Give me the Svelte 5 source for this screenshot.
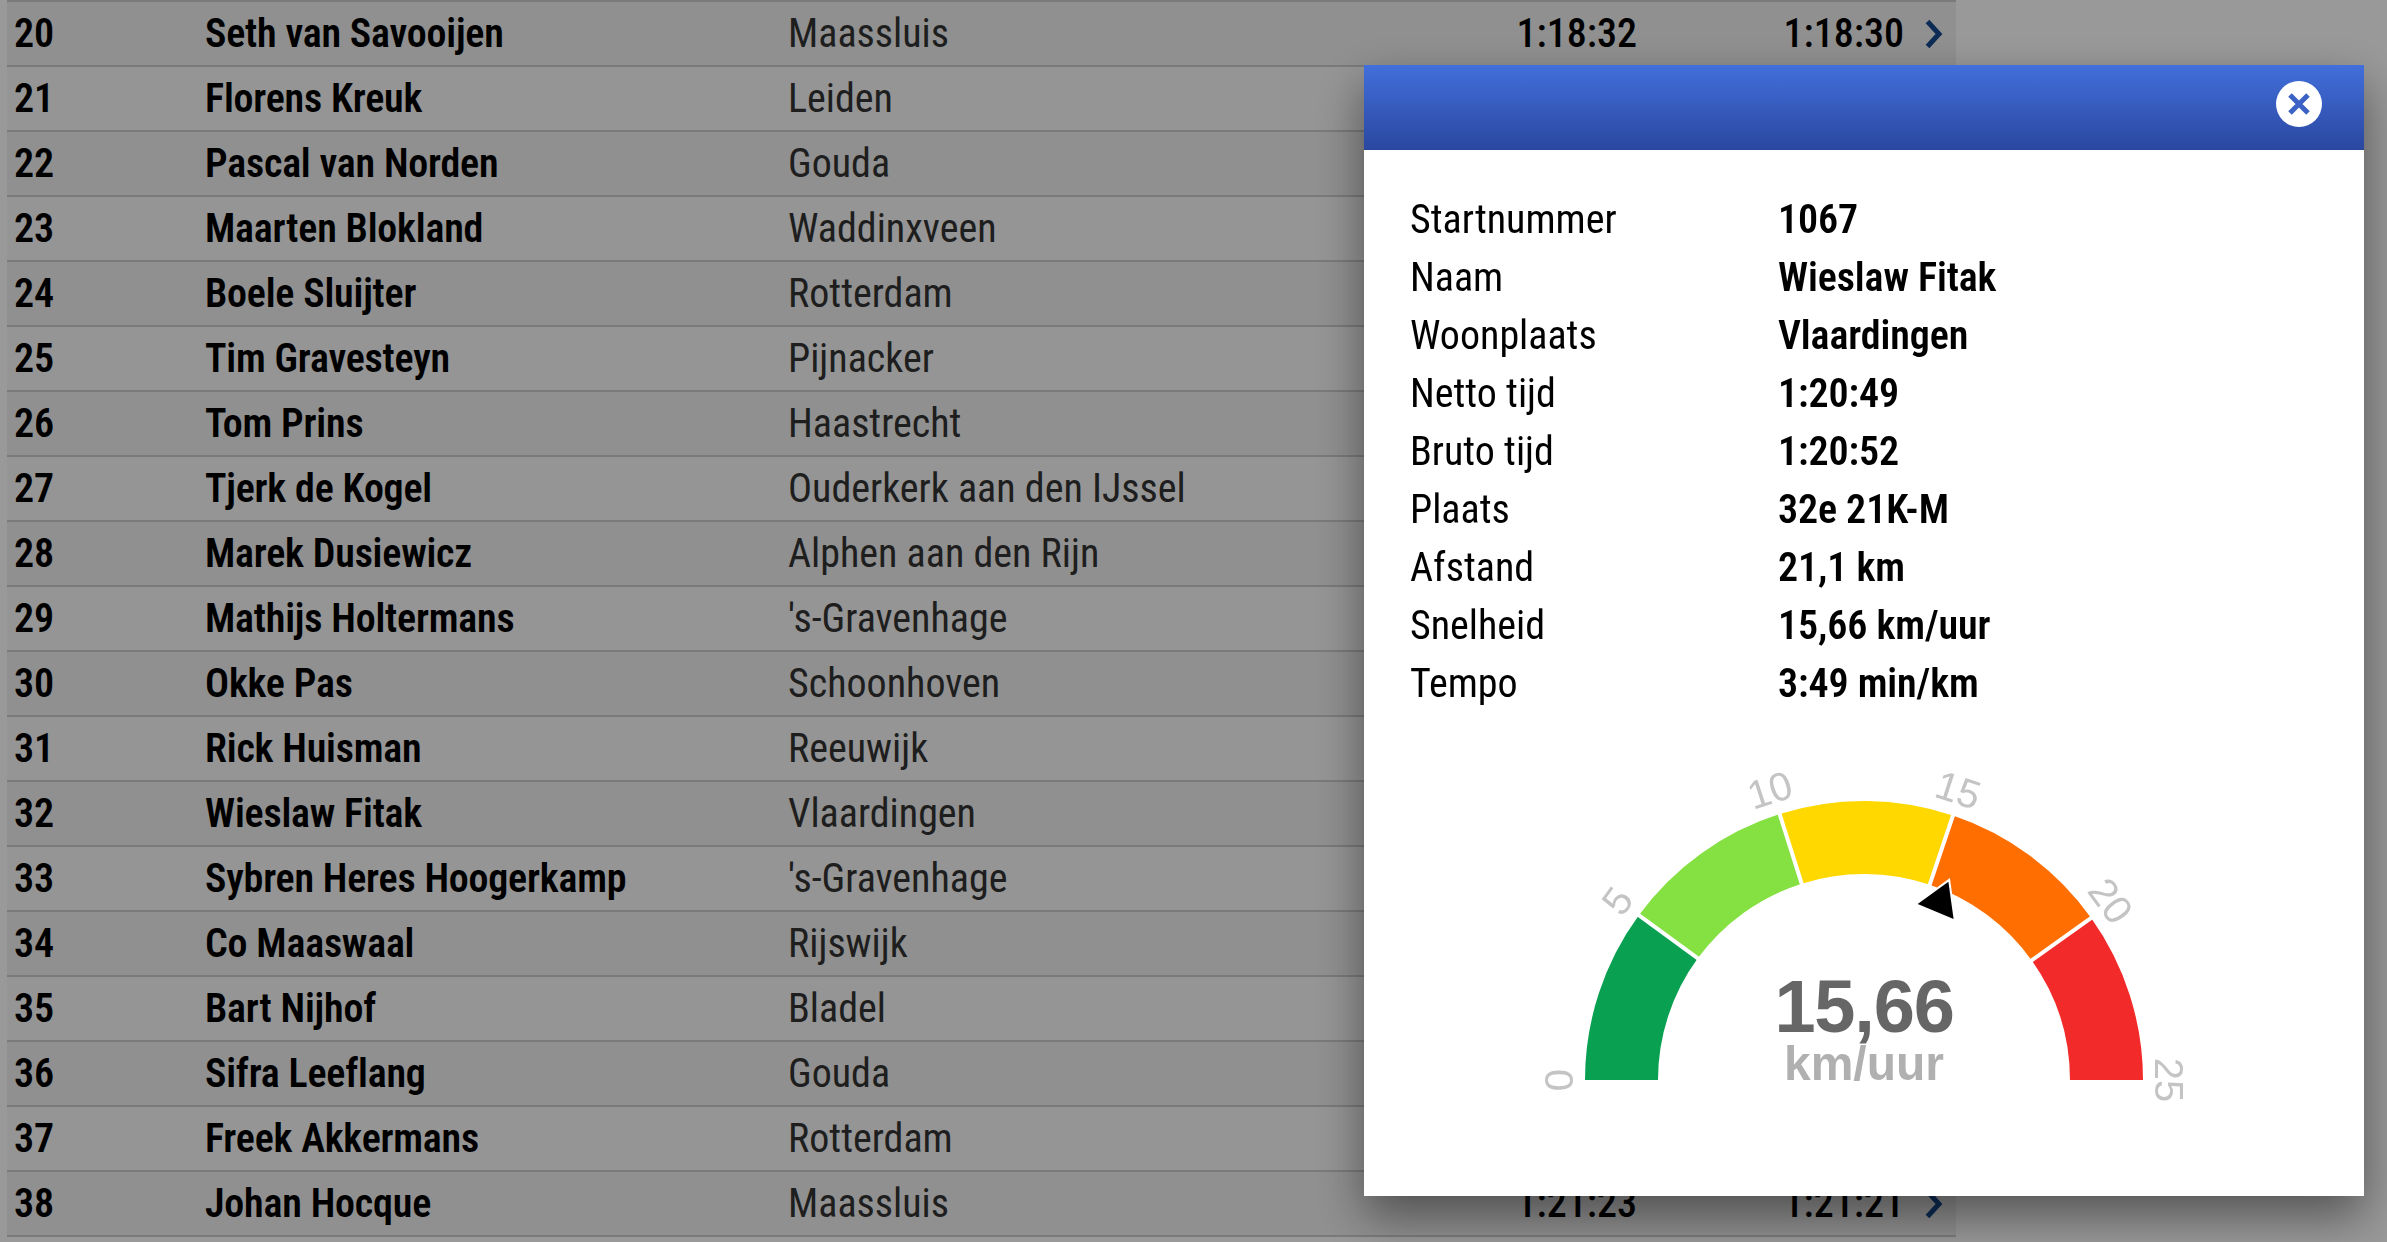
<script>
	const rows = [
		{ nr: 20, name: 'Seth van Savooijen', city: 'Maassluis', netto: '1:18:32', bruto: '1:18:30' },
		{ nr: 21, name: 'Florens Kreuk', city: 'Leiden' },
		{ nr: 22, name: 'Pascal van Norden', city: 'Gouda' },
		{ nr: 23, name: 'Maarten Blokland', city: 'Waddinxveen' },
		{ nr: 24, name: 'Boele Sluijter', city: 'Rotterdam' },
		{ nr: 25, name: 'Tim Gravesteyn', city: 'Pijnacker' },
		{ nr: 26, name: 'Tom Prins', city: 'Haastrecht' },
		{ nr: 27, name: 'Tjerk de Kogel', city: 'Ouderkerk aan den IJssel' },
		{ nr: 28, name: 'Marek Dusiewicz', city: 'Alphen aan den Rijn' },
		{ nr: 29, name: 'Mathijs Holtermans', city: "'s-Gravenhage" },
		{ nr: 30, name: 'Okke Pas', city: 'Schoonhoven' },
		{ nr: 31, name: 'Rick Huisman', city: 'Reeuwijk' },
		{ nr: 32, name: 'Wieslaw Fitak', city: 'Vlaardingen' },
		{ nr: 33, name: 'Sybren Heres Hoogerkamp', city: "'s-Gravenhage" },
		{ nr: 34, name: 'Co Maaswaal', city: 'Rijswijk' },
		{ nr: 35, name: 'Bart Nijhof', city: 'Bladel' },
		{ nr: 36, name: 'Sifra Leeflang', city: 'Gouda' },
		{ nr: 37, name: 'Freek Akkermans', city: 'Rotterdam' },
		{ nr: 38, name: 'Johan Hocque', city: 'Maassluis', netto: '1:21:23', bruto: '1:21:21' },
	];

	const details = [
		['Startnummer', '1067'],
		['Naam', 'Wieslaw Fitak'],
		['Woonplaats', 'Vlaardingen'],
		['Netto tijd', '1:20:49'],
		['Bruto tijd', '1:20:52'],
		['Plaats', '32e 21K-M'],
		['Afstand', '21,1 km'],
		['Snelheid', '15,66 km/uur'],
		['Tempo', '3:49 min/km'],
	];

	// Gauge geometry, center of the dial is (350, 320) in the svg
	const cx = 350;
	const cy = 320;
	const outer = 279;
	const inner = 206;
	const colors = ['#09a151', '#84e141', '#ffd800', '#ff6e00', '#f22a2a'];
	// band edges in degrees from the left end, slightly off 36 steps like the reference
	const stops = [0, 36.2, 72.4, 108.6, 144.5, 180];

	function point(r, deg) {
		const a = (deg * Math.PI) / 180;
		return `${(cx - r * Math.cos(a)).toFixed(2)} ${(cy - r * Math.sin(a)).toFixed(2)}`;
	}

	function segment(i) {
		const a = stops[i];
		const b = stops[i + 1];
		return `M${point(outer, a)} A${outer} ${outer} 0 0 1 ${point(outer, b)} L${point(inner, b)} A${inner} ${inner} 0 0 0 ${point(inner, a)} Z`;
	}

	const ticks = [0, 5, 10, 15, 20, 25].map((v, i) => {
		const deg = i * 36;
		const a = (deg * Math.PI) / 180;
		return { v, x: cx - 305 * Math.cos(a), y: cy - 305 * Math.sin(a), rot: deg - 90 };
	});
</script>

<div class="page">
	<div class="table">
		{#each rows as row, i}
			<div class="row" class:odd={i % 2 === 1}>
				<span class="nr">{row.nr}</span>
				<span class="name">{row.name}</span>
				<span class="city">{row.city}</span>
				<span class="time">{row.netto ?? ''}</span>
				<span class="time">{row.bruto ?? ''}</span>
				<svg class="chevron" viewBox="0 0 18 30" width="18" height="30">
					<path d="M2.5 2.5 L14 15 L2.5 27.5" fill="none" stroke="#154a90" stroke-width="5" />
				</svg>
			</div>
		{/each}
	</div>
</div>

<div class="overlay"></div>

<div class="modal">
	<div class="modal-header">
		<button class="close" aria-label="Sluiten">
			<svg viewBox="0 0 46 46" width="46" height="46">
				<circle cx="23" cy="23" r="23" fill="#fff" />
				<path d="M14 14 L32 32 M32 14 L14 32" stroke="#3c62c6" stroke-width="5" fill="none" />
			</svg>
		</button>
	</div>
	<div class="modal-body">
		<div class="details">
			{#each details as [label, value]}
				<span class="label">{label}</span>
				<span class="value">{value}</span>
			{/each}
		</div>
		<svg class="gauge" viewBox="0 0 700 360" width="700" height="360">
			{#each colors as color, i}
				<path d={segment(i)} fill={color} />
			{/each}
			{#each stops.slice(1, -1) as deg}
				<path d="M{point(inner - 1, deg)} L{point(outer + 1, deg)}" stroke="#fff" stroke-width="4" />
			{/each}
			{#each ticks as t}
				<text class="tick" x={t.x} y={t.y} transform="rotate({t.rot} {t.x} {t.y})">{t.v}</text>
			{/each}
			<polygon points="434.4,121.7 403.7,144 439.6,159" fill="#000" stroke="#fff" stroke-width="4" paint-order="stroke" />
			<text class="speed" x="350" y="272">15,66</text>
			<text class="unit" x="350" y="320">km/uur</text>
		</svg>
	</div>
</div>

<style>
	:global(body) {
		background: #fff;
		font-family: 'Roboto', sans-serif;
	}

	.page {
		height: 1242px;
		overflow: hidden;
		padding: 0 431px 0 7px;
		box-sizing: border-box;
	}

	.table {
		border-top: 2px solid #ccc;
	}

	.row {
		display: grid;
		grid-template-columns: 191px 583px 1fr 200px 267px 39px;
		align-items: center;
		height: 65px;
		box-sizing: border-box;
		border-bottom: 2px solid #ccc;
		background: #f0f0f0;
		font-size: 40px;
		font-stretch: 75%;
		color: #000;
		padding-left: 7px;
		padding-right: 13px;
	}

	.row.odd {
		background: #f8f8f8;
	}

	.nr,
	.name {
		font-weight: 600;
	}

	.name {
		letter-spacing: -0.2px;
	}

	.city {
		color: #333;
		font-weight: 400;
	}

	.time {
		font-weight: 500;
		text-align: right;
	}

	.chevron {
		justify-self: end;
	}

	.overlay {
		position: fixed;
		inset: 0;
		background: rgba(0, 0, 0, 0.4);
	}

	.modal {
		position: fixed;
		left: 1364px;
		top: 65px;
		width: 1000px;
		height: 1131px;
		background: #fff;
		box-shadow: 0 20px 45px rgba(0, 0, 0, 0.45);
	}

	.modal-header {
		height: 85px;
		box-sizing: border-box;
		background: linear-gradient(#426fdb, #2a47a0);
		display: flex;
		align-items: flex-start;
		justify-content: flex-end;
		padding: 16px 42px 0 0;
	}

	.close {
		padding: 0;
		border: none;
		background: none;
		width: 46px;
		height: 46px;
	}

	.close svg {
		display: block;
	}

	.modal-body {
		padding: 40px 46px 0;
	}

	.details {
		display: grid;
		grid-template-columns: 368px 1fr;
		grid-auto-rows: 58px;
		align-items: center;
		font-size: 40px;
		font-stretch: 75%;
		color: #000;
	}

	.value {
		font-weight: 600;
		letter-spacing: -0.1px;
	}

	.gauge {
		display: block;
		margin: 48px auto 0;
	}

	.tick {
		font-family: 'Liberation Sans', Arial, sans-serif;
		font-size: 40px;
		fill: #c4c4c4;
		text-anchor: middle;
		dominant-baseline: central;
	}

	.speed,
	.unit {
		font-family: 'Liberation Sans', Arial, sans-serif;
		font-weight: 700;
		text-anchor: middle;
	}

	.speed {
		font-size: 74px;
		letter-spacing: -1.2px;
		fill: #666;
	}

	.unit {
		font-size: 48px;
		fill: #b0b0b0;
	}
</style>
